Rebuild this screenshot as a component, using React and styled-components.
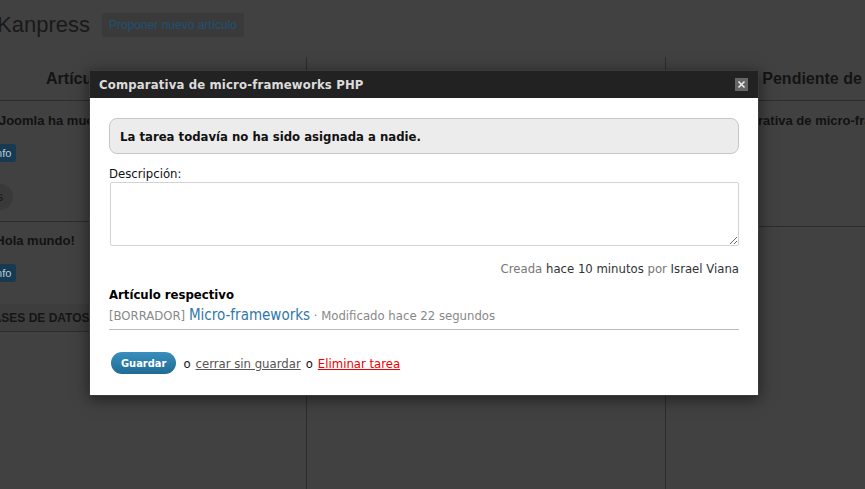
import React from "react";
import styled, { createGlobalStyle } from "styled-components";

const Global = createGlobalStyle`
  html, body { margin: 0; padding: 0; }
  body {
    width: 865px;
    height: 489px;
    overflow: hidden;
    background: #414141;
    font-family: "Liberation Sans", Arial, sans-serif;
  }
`;

const Page = styled.div`
  position: relative;
  width: 865px;
  height: 489px;
  overflow: hidden;
  background: #414141;
`;

const TopBar = styled.div`
  display: flex;
  align-items: center;
  gap: 12px;
  height: 50px;
  padding-bottom: 7px;
  margin-left: -3px;
`;

const Brand = styled.h1`
  margin: 0;
  font-size: 22px;
  font-weight: normal;
  color: #191919;
`;

const ProposeButton = styled.span`
  font-size: 12px;
  color: #1f5173;
  background: #3a3a3a;
  padding: 5px 7px;
  border-radius: 2px;
`;

const Board = styled.div`
  display: grid;
  grid-template-columns: 359px 359px 359px;
  margin-left: -53px;
  height: 432px;
`;

const Column = styled.div`
  border-left: ${(p) => (p.$first ? "none" : "1px solid #2c2c2c")};
  display: flex;
  flex-direction: column;
`;

const ColumnHead = styled.div`
  height: 44px;
  box-sizing: border-box;
  display: flex;
  align-items: center;
  justify-content: center;
  font-size: 16px;
  font-weight: bold;
  color: #141414;
  border-bottom: 1px solid #2c2c2c;
  white-space: nowrap;
`;

const Card = styled.div`
  padding: ${(p) => p.$pad || "12px 10px 11px 44px"};
  border-bottom: ${(p) => (p.$noLine ? "none" : "1px solid #2c2c2c")};
  display: flex;
  flex-direction: column;
  align-items: flex-start;
  min-height: ${(p) => p.$min || 0}px;
  box-sizing: border-box;
`;

const CardTitle = styled.div`
  font-size: 13px;
  font-weight: bold;
  color: #121212;
  white-space: nowrap;
  line-height: 16px;
`;

const Badge = styled.span`
  margin-top: 15px;
  margin-left: -3px;
  font-size: 11px;
  color: #b9cbd8;
  background: #173a52;
  border-radius: 3px;
  padding: 2px 5px;
  line-height: 14px;
`;

const Pill = styled.span`
  margin-top: 22px;
  margin-left: -52px;
  font-size: 12px;
  line-height: 16px;
  color: #151515;
  background: #393939;
  border-radius: 13px;
  padding: 5px 10px;
`;

const SectionHead = styled.div`
  height: 27px;
  display: flex;
  align-items: center;
  padding-left: 37px;
  font-size: 12px;
  font-weight: bold;
  color: #151515;
  background: #3d3d3d;
  border-bottom: 1px solid #2c2c2c;
  margin-top: 22px;
  white-space: nowrap;
`;

const Modal = styled.div`
  position: absolute;
  left: 89px;
  top: 70px;
  width: 670px;
  background: #fff;
  border: 1px solid #3a3a3a;
  box-sizing: border-box;
  box-shadow: 0 3px 14px rgba(0, 0, 0, 0.55);
  font-family: "DejaVu Sans Condensed", "DejaVu Sans", sans-serif;
  font-stretch: condensed;
`;

const ModalHead = styled.div`
  height: 27px;
  background: #222;
  display: flex;
  align-items: center;
  justify-content: space-between;
  padding: 0 10px 0 9px;
`;

const ModalTitle = styled.div`
  font-size: 13px;
  font-weight: bold;
  color: #dcdcdc;
  letter-spacing: 0.15px;
`;

const CloseBtn = styled.div`
  width: 13px;
  height: 13px;
  background: #666;
  display: flex;
  align-items: center;
  justify-content: center;
`;

const ModalBody = styled.div`
  padding: 20px 19px 21px 19px;
  display: flex;
  flex-direction: column;
`;

const Notice = styled.div`
  height: 36px;
  box-sizing: border-box;
  border: 1px solid #c6c6c6;
  background: #ececec;
  border-radius: 8px;
  display: flex;
  align-items: center;
  padding-left: 10px;
  font-size: 13px;
  font-weight: bold;
  color: #111;
`;

const Label = styled.label`
  margin-top: 12px;
  font-size: 13px;
  color: #111;
  line-height: 16px;
`;

const TextArea = styled.textarea`
  margin: 0 0 0 1px;
  height: 64px;
  box-sizing: border-box;
  border: 1px solid #d3d3d3;
  border-radius: 2px;
  font-family: inherit;
  resize: vertical;
  display: block;
  outline: none;
`;

const Meta = styled.div`
  margin-top: 15px;
  text-align: right;
  font-size: 13px;
  color: #333;
  line-height: 16px;
`;

const Muted = styled.span`
  color: #777;
`;

const SubTitle = styled.div`
  margin-top: 10px;
  font-size: 13px;
  font-weight: bold;
  color: #000;
  line-height: 16px;
`;

const ArticleLine = styled.div`
  margin-top: 4px;
  height: 17px;
  font-size: 13px;
  color: #888;
  line-height: 17px;
  padding-bottom: 5px;
  border-bottom: 1px solid #bbb;
`;

const ArticleLink = styled.a`
  font-size: 15px;
  line-height: 17px;
  color: #2f78a8;
  text-decoration: none;
`;

const Actions = styled.div`
  margin-top: 22px;
  height: 22px;
  display: flex;
  align-items: center;
  gap: 5px;
  padding-left: 2px;
  font-size: 13px;
  color: #111;
`;

const SaveButton = styled.button`
  height: 22px;
  padding: 0 10px;
  border: none;
  border-radius: 11px;
  background: linear-gradient(#3a8fbd, #1f6b94);
  color: #fff;
  font-family: inherit;
  font-stretch: condensed;
  font-size: 11px;
  font-weight: bold;
  margin-right: 2px;
`;

const TextLink = styled.a`
  color: ${(p) => p.$c};
  text-decoration: underline;
`;

export default function App() {
  return (
    <Page>
      <Global />
      <TopBar>
        <Brand>Kanpress</Brand>
        <ProposeButton>Proponer nuevo artículo</ProposeButton>
      </TopBar>
      <Board>
        <Column $first>
          <ColumnHead>Artículos propuestos</ColumnHead>
          <Card>
            <CardTitle>¿Joomla ha muerto?</CardTitle>
            <Badge>Info</Badge>
            <Pill>Opiniones</Pill>
          </Card>
          <Card $noLine $pad="11px 10px 0 44px">
            <CardTitle>¡Hola mundo!</CardTitle>
            <Badge>Info</Badge>
          </Card>
          <SectionHead>BASES DE DATOS</SectionHead>
        </Column>
        <Column>
          <ColumnHead>En redacción</ColumnHead>
        </Column>
        <Column>
          <ColumnHead>Pendiente de revisión</ColumnHead>
          <Card $min={126} $pad="12px 10px 11px 48px">
            <CardTitle>Comparativa de micro-frameworks PHP</CardTitle>
          </Card>
        </Column>
      </Board>

      <Modal>
        <ModalHead>
          <ModalTitle>Comparativa de micro-frameworks PHP</ModalTitle>
          <CloseBtn>
            <svg width="9" height="9" viewBox="0 0 9 9">
              <path d="M1.5 1.5 L7.5 7.5 M7.5 1.5 L1.5 7.5" stroke="#eee" strokeWidth="1.5" />
            </svg>
          </CloseBtn>
        </ModalHead>
        <ModalBody>
          <Notice>La tarea todavía no ha sido asignada a nadie.</Notice>
          <Label>Descripción:</Label>
          <TextArea />
          <Meta>
            <Muted>Creada</Muted> hace 10 minutos <Muted>por</Muted> Israel Viana
          </Meta>
          <SubTitle>Artículo respectivo</SubTitle>
          <ArticleLine>
            [BORRADOR] <ArticleLink>Micro-frameworks</ArticleLink> · Modificado hace 22 segundos
          </ArticleLine>
          <Actions>
            <SaveButton>Guardar</SaveButton>
            o <TextLink $c="#555">cerrar sin guardar</TextLink> o{" "}
            <TextLink $c="#e00">Eliminar tarea</TextLink>
          </Actions>
        </ModalBody>
      </Modal>
    </Page>
  );
}
